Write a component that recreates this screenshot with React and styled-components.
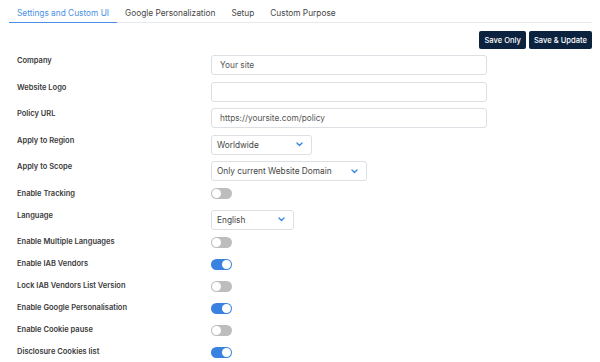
import React from 'react'
import styled, { createGlobalStyle } from 'styled-components'

const GlobalStyle = createGlobalStyle`
  html, body {
    margin: 0;
    padding: 0;
    background: #fff;
    font-family: Inter, "Liberation Sans", sans-serif;
    color: #444;
  }
  * { box-sizing: border-box; }
`

const Page = styled.div`
  width: 600px;
  height: 362px;
  overflow: hidden;
  padding: 0 8px 0 9px;
`

const Tabs = styled.div`
  display: flex;
  height: 23px;
  border-bottom: 1px solid #e6e9ee;
`

const Tab = styled.div`
  padding: 5px 8px 0;
  font-size: 8.3px;
  line-height: 17px;
  color: ${({ active }) => (active ? '#4a90e2' : '#454545')};
  border-bottom: ${({ active }) => (active ? '1px solid #4a90e2' : 'none')};
  margin-bottom: -1px;
`

const Actions = styled.div`
  display: flex;
  justify-content: flex-end;
  gap: 3px;
  margin: 8px 0 6px;
`

const Button = styled.button`
  height: 18px;
  padding: 0 5px;
  border: none;
  border-radius: 2px;
  background: #0c2340;
  color: #fff;
  font-family: inherit;
  font-size: 7.6px;
  font-weight: 500;
`

const Form = styled.div`
  display: flex;
  flex-direction: column;
  gap: 6.5px;
`

const Row = styled.div`
  display: flex;
  align-items: flex-start;
`

const Label = styled.div`
  width: 202px;
  padding-left: 8px;
  font-size: 7.5px;
  font-weight: 600;
  line-height: 12px;
  color: #3a3a3a;
`

const Input = styled.div`
  width: 276px;
  height: 20px;
  border: 1px solid #dcdfe3;
  border-radius: 3px;
  padding: 0 8px;
  font-size: 8.3px;
  line-height: 18px;
  color: #555;
`

const Select = styled.div`
  display: flex;
  align-items: center;
  justify-content: space-between;
  width: ${({ width }) => width}px;
  height: 20px;
  border: 1px solid #dcdfe3;
  border-radius: 3px;
  padding: 0 8px 0 5px;
  font-size: 8.3px;
  color: #444;
`

const Chevron = () => (
  <svg width="7" height="5" viewBox="0 0 7 5">
    <path d="M1 1l2.5 2.5L6 1" fill="none" stroke="#3a87e0" strokeWidth="1.4" strokeLinecap="round" strokeLinejoin="round" />
  </svg>
)

const ToggleWrap = styled.div`
  height: 15.5px;
  display: flex;
  align-items: flex-start;
  padding-top: 0.5px;
`

const Toggle = styled.div`
  position: relative;
  width: 21px;
  height: 11px;
  border-radius: 6px;
  background: ${({ on }) => (on ? '#3a82e0' : '#bdbdbd')};
  &::after {
    content: '';
    position: absolute;
    top: 1px;
    left: ${({ on }) => (on ? '11px' : '1px')};
    width: 9px;
    height: 9px;
    border-radius: 50%;
    background: #fff;
  }
`

const Switch = ({ on }) => (
  <ToggleWrap>
    <Toggle on={on ? 1 : 0} />
  </ToggleWrap>
)

const rows = [
  { label: 'Company', input: 'Your site' },
  { label: 'Website Logo', input: '' },
  { label: 'Policy URL', input: 'https://yoursite.com/policy' },
  { label: 'Apply to Region', select: 'Worldwide', width: 101 },
  { label: 'Apply to Scope', select: 'Only current Website Domain', width: 156 },
  { label: 'Enable Tracking', toggle: false },
  { label: 'Language', select: 'English', width: 83 },
  { label: 'Enable Multiple Languages', toggle: false },
  { label: 'Enable IAB Vendors', toggle: true },
  { label: 'Lock IAB Vendors List Version', toggle: false },
  { label: 'Enable Google Personalisation', toggle: true },
  { label: 'Enable Cookie pause', toggle: false },
  { label: 'Disclosure Cookies list', toggle: true },
]

export default function App() {
  return (
    <Page>
      <GlobalStyle />
      <Tabs>
        <Tab active>Settings and Custom UI</Tab>
        <Tab>Google Personalization</Tab>
        <Tab>Setup</Tab>
        <Tab>Custom Purpose</Tab>
      </Tabs>
      <Actions>
        <Button>Save Only</Button>
        <Button>Save &amp; Update</Button>
      </Actions>
      <Form>
        {rows.map((r) => (
          <Row key={r.label}>
            <Label>{r.label}</Label>
            {r.input !== undefined && <Input>{r.input}</Input>}
            {r.select && (
              <Select width={r.width}>
                {r.select}
                <Chevron />
              </Select>
            )}
            {r.toggle !== undefined && <Switch on={r.toggle} />}
          </Row>
        ))}
      </Form>
    </Page>
  )
}
